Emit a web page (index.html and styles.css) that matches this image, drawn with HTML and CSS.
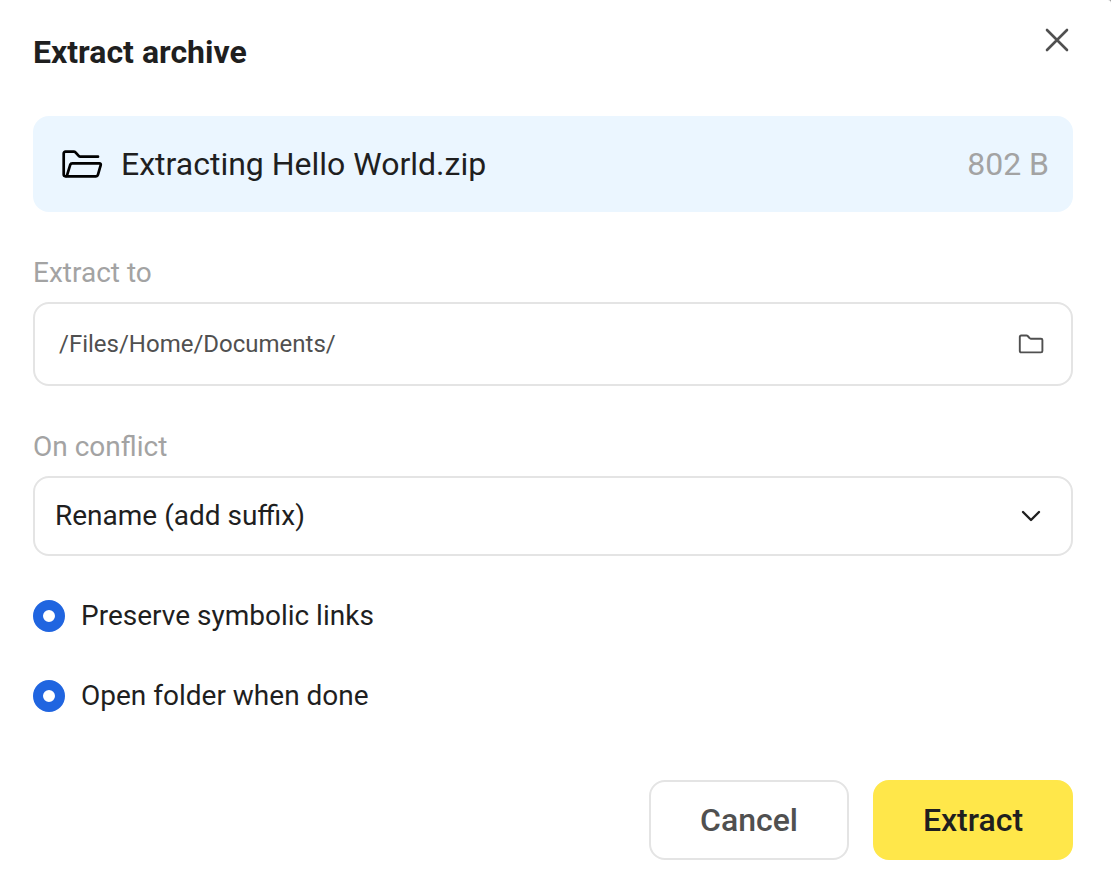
FILE: index.html
```html
<!DOCTYPE html>
<html lang="en">
<head>
    <meta charset="UTF-8">
    <meta name="viewport" content="width=device-width, initial-scale=1.0">
    <title>Extract archive</title>
    <link rel="stylesheet" href="styles.css">
</head>
<body>
    <form class="dialog">
        <header class="dialog-header">
            <h1>Extract archive</h1>
            <button type="button" class="close-button" aria-label="Close">
                <svg width="24" height="24" viewBox="0 0 24 24">
                    <path d="M2 2l20 20M22 2L2 22"/>
                </svg>
            </button>
        </header>

        <div class="archive">
            <svg class="archive-icon" width="40" height="28" viewBox="0 0 40 28">
                <path d="M4 26.300H3.400A1.700 1.700 0 0 1 1.700 24.600V3.400A1.700 1.700 0 0 1 3.400 1.700H11.700Q12.800 1.700 13.500 2.400L16.700 5.900Q17.400 6.700 18.400 6.700H36"/>
                <path d="M4.700 26.300L8.200 14.800Q8.700 13.300 10.200 13.300H37.300Q39.200 13.300 38.700 15.100L35.900 24.900Q35.500 26.300 34 26.300Z"/>
            </svg>
            <span class="archive-name">Extracting Hello World.zip</span>
            <span class="archive-size">802 B</span>
        </div>

        <div class="label">Extract to</div>
        <div class="field path-field">
            <span>/Files/Home/Documents/</span>
            <svg width="26" height="20" viewBox="0 0 26 20">
                <path d="M3.200 1.500H8.500Q9.200 1.500 9.700 2L11.500 4Q12 4.700 12.800 4.700H23Q24.400 4.700 24.400 6.100V17Q24.400 18.400 23 18.400H3.200Q1.800 18.400 1.800 17V2.900Q1.800 1.500 3.200 1.500Z"/>
            </svg>
        </div>

        <div class="label">On conflict</div>
        <div class="field select-field">
            <span>Rename (add suffix)</span>
            <svg width="20" height="12" viewBox="0 0 20 12">
                <path d="M2 2l8 8 8-8"/>
            </svg>
        </div>

        <label class="option">
            <input type="radio" name="symlinks" checked>
            <span>Preserve symbolic links</span>
        </label>
        <label class="option">
            <input type="radio" name="open" checked>
            <span>Open folder when done</span>
        </label>

        <footer class="actions">
            <button type="button" class="button">Cancel</button>
            <button type="button" class="button button-primary">Extract</button>
        </footer>
    </form>
</body>
</html>
```
FILE: styles.css
```css
* {
    box-sizing: border-box;
}
body {
    margin: 0;
    background: #999;
    color: #1f1f1f;
    font-family: Roboto, sans-serif;
    font-size: 28px;
    overflow: hidden;
}
svg {
    fill: none;
    stroke: currentColor;
    stroke-width: 2;
    stroke-linecap: round;
    stroke-linejoin: round;
    flex: none;
}
.dialog {
    height: 885px;
    padding: 28px 38px 0 33px;
    border-top-right-radius: 3px;
    background: #fff;
}
.dialog-header {
    display: flex;
    justify-content: space-between;
    align-items: flex-start;
    height: 88px;
}
h1 {
    margin: 0;
    font-size: 32px;
    line-height: 48px;
    font-weight: 700;
}
.close-button {
    display: flex;
    padding: 0;
    margin-right: 4px;
    border: none;
    background: none;
    color: #505050;
    cursor: pointer;
}
.close-button svg {
    stroke-width: 2.6;
}
.archive {
    display: flex;
    align-items: center;
    height: 96px;
    padding: 0 24px 0 29px;
    border-radius: 16px;
    background: #ebf6ff;
    font-size: 32px;
}
.archive-icon {
    color: #000;
    margin-right: 19px;
    stroke-width: 2.7;
    overflow: visible;
}
.archive-size {
    margin-left: auto;
    color: #a3a3a3;
}
.label {
    margin-top: 45px;
    margin-bottom: 13px;
    line-height: 32px;
    color: #a3a3a3;
}
.field {
    display: flex;
    align-items: center;
    justify-content: space-between;
    border: 2px solid #e4e4e4;
    border-radius: 16px;
}
.path-field {
    height: 84px;
    padding: 0 27px 0 24px;
    font-size: 24px;
    color: #505050;
}
.path-field svg {
    stroke-width: 1.9;
}
.select-field {
    height: 80px;
    padding: 0 30px 0 20px;
}
.select-field span,
.option span {
    padding-bottom: 2px;
}
.select-field svg {
    stroke-width: 2.4;
}
.option {
    display: flex;
    align-items: center;
    gap: 16px;
    height: 32px;
    margin-top: 48px;
}
.select-field + .option {
    margin-top: 44px;
}
.option input {
    appearance: none;
    width: 32px;
    height: 32px;
    margin: 0;
    border: 10px solid #2065e0;
    border-radius: 50%;
    background: #fff;
}
.actions {
    display: flex;
    justify-content: flex-end;
    gap: 24px;
    margin-top: 68px;
}
.button {
    width: 200px;
    height: 80px;
    padding: 0;
    border: 2px solid #e4e4e4;
    border-radius: 16px;
    background: #fff;
    color: #505050;
    font-family: inherit;
    font-size: 32px;
    font-weight: 500;
    cursor: pointer;
}
.button-primary {
    border-color: #ffe74a;
    background: #ffe74a;
    color: #1f1f1f;
}
```
